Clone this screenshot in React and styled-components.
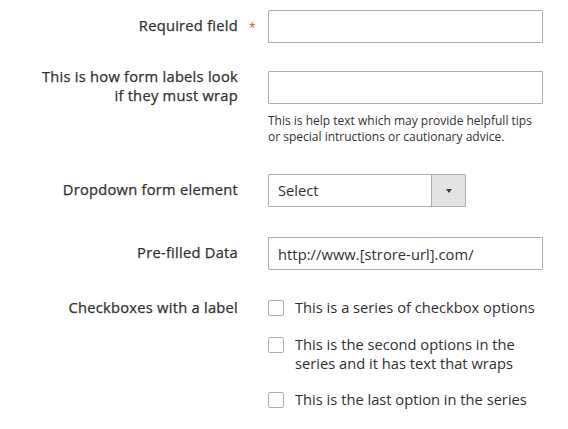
import styled, { createGlobalStyle } from "styled-components";

const GlobalStyle = createGlobalStyle`
    body {
        margin: 0;
        background: #FFFFFF;
        color: #303030;
        font-family: "Open Sans", "DejaVu Sans", sans-serif;
    }
`;

const Form = styled.div`
    display: flex;
    flex-direction: column;
    padding-top: 10px;
`;

const Field = styled.div`
    display: grid;
    grid-template-columns: 238px 30px 275px;
    align-items: start;
    margin-bottom: ${({ $gap }) => ($gap ?? 28)}px;
`;

// no semibold face installed, so regular + a thin stroke stands in for 600
const Label = styled.label`
    grid-column: 1;
    text-align: right;
    font-size: 14.7px;
    font-weight: 400;
    letter-spacing: 0.25px;
    -webkit-text-stroke: 0.25px #303030;
    color: #303030;
    line-height: 19px;
    padding-top: ${({ $wrap, $top }) => ($wrap || $top ? 0 : 6)}px;
    margin-top: ${({ $wrap }) => ($wrap ? -4 : 0)}px;
`;

const Required = styled.span`
    grid-column: 2;
    padding: 8px 0 0 11px;
    font-size: 12px;
    line-height: 19px;
    color: #EB5202;
`;

const Control = styled.div`
    grid-column: 3;
`;

const Input = styled.input`
    display: block;
    box-sizing: border-box;
    width: 100%;
    height: 33px;
    margin: 0;
    padding: 0 9px;
    border: 1px solid #ADADAD;
    border-radius: 1px;
    background: #FFFFFF;
    font-family: inherit;
    font-size: 14.7px;
    letter-spacing: 0.05px;
    color: #303030;
    outline: none;
`;

const Note = styled.p`
    margin: 9px 0 0;
    font-size: 12px;
    line-height: 15.6px;
    color: #303030;
`;

const SelectBox = styled.div`
    display: flex;
    box-sizing: border-box;
    width: 198px;
    height: 33px;
    border: 1px solid #ADADAD;
    border-radius: 1px;
    background: #FFFFFF;
`;

const SelectValue = styled.span`
    flex: 1;
    padding-left: 9px;
    font-size: 14.7px;
    line-height: 31px;
    color: #303030;
`;

const SelectArrow = styled.span`
    display: flex;
    align-items: center;
    justify-content: center;
    width: 33px;
    border-left: 1px solid #ADADAD;
    background: #E3E3E3;

    &::after {
        content: "";
        border-left: 3.5px solid transparent;
        border-right: 3.5px solid transparent;
        border-top: 4px solid #41362F;
    }
`;

const OptionList = styled.div`
    display: flex;
    flex-direction: column;
    gap: 17.5px;
`;

const Option = styled.label`
    display: flex;
    align-items: flex-start;
    font-size: 14.7px;
    line-height: 19px;
    color: #303030;
`;

const Checkbox = styled.input`
    appearance: none;
    flex: none;
    box-sizing: border-box;
    width: 16px;
    height: 16px;
    margin: 2px 11px 0 0;
    border: 1px solid #ADADAD;
    border-radius: 2px;
    background: #FFFFFF;
`;

const options = [
    "This is a series of checkbox options",
    "This is the second options in the series and it has text that wraps",
    "This is the last option in the series",
];

export default function App() {
    return (
        <>
            <GlobalStyle />
            <Form>
                <Field>
                    <Label>Required field</Label>
                    <Required>*</Required>
                    <Control>
                        <Input type="text" />
                    </Control>
                </Field>

                <Field $gap={30}>
                    <Label $wrap>This is how form labels look<br />if they must wrap</Label>
                    <Control>
                        <Input type="text" />
                        <Note>This is help text which may provide helpfull tips or special intructions or cautionary advice.</Note>
                    </Control>
                </Field>

                <Field $gap={30}>
                    <Label>Dropdown form element</Label>
                    <Control>
                        <SelectBox>
                            <SelectValue>Select</SelectValue>
                            <SelectArrow />
                        </SelectBox>
                    </Control>
                </Field>

                <Field>
                    <Label>Pre-filled Data</Label>
                    <Control>
                        <Input type="text" defaultValue="http://www.[strore-url].com/" />
                    </Control>
                </Field>

                <Field>
                    <Label $top>Checkboxes with a label</Label>
                    <Control>
                        <OptionList>
                            {options.map((text) => (
                                <Option key={text}>
                                    <Checkbox type="checkbox" />
                                    <span>{text}</span>
                                </Option>
                            ))}
                        </OptionList>
                    </Control>
                </Field>
            </Form>
        </>
    );
}
